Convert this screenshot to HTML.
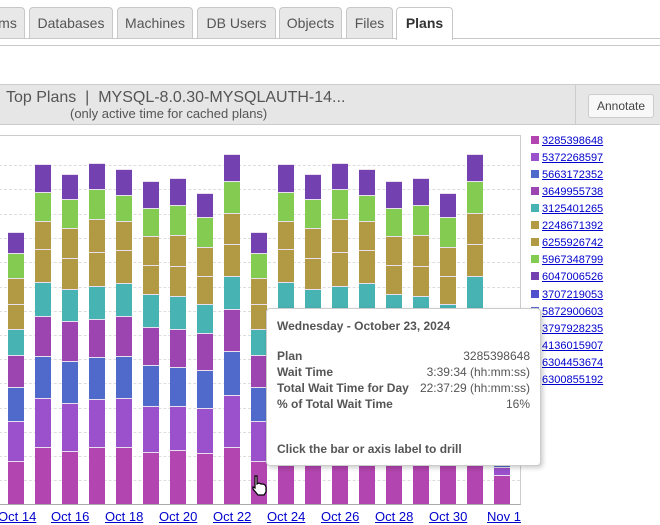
<!DOCTYPE html>
<html><head><meta charset="utf-8">
<style>
*{box-sizing:border-box}
body{margin:0;width:660px;height:525px;overflow:hidden;background:#fff;font-family:"Liberation Sans",Arial,sans-serif;position:relative}
.tab{position:absolute;top:7px;height:32px;background:#e8e8e8;border:1px solid #c8c8c8;border-bottom:none;border-radius:4px 4px 0 0;font-size:14px;color:#555;text-align:center;line-height:30px}
.tab.active{background:#fff;color:#333;font-weight:bold;height:33px}
.hl{position:absolute;left:0;width:660px;height:1px;background:#c8c8c8}
#hdr{position:absolute;left:0;top:84px;width:660px;height:41px;background:#e6e6e6;border-top:1px solid #ccc;border-bottom:1px solid #ccc}
#chart{position:absolute;left:-2px;top:135px;width:523px;height:370px;border:1px solid #ccc;border-bottom:1px solid #aaa}
.g{position:absolute;left:0;width:521px;border-top:1px dashed #ddd}
.seg{position:absolute;left:0;width:16px;border-top:1px solid #e8e0ee}
.lg{position:absolute;left:531px;font-size:11px;color:#00c;text-decoration:underline;line-height:13px}
.lg i{display:inline-block;width:8px;height:8px;margin-right:3px;vertical-align:0}
.ax{position:absolute;top:509px;font-size:13px;color:#00c;text-decoration:underline}
#tip{position:absolute;left:266px;top:308px;width:275px;height:158px;background:#fff;border:1px solid #ccc;border-radius:4px;box-shadow:2px 2px 5px rgba(0,0,0,.2);font-size:12px;color:#555;font-weight:bold}
#tip .r{position:absolute;left:10px;right:10px}
#tip .r span{float:right;font-weight:normal}
</style></head><body>
<div class="tab" style="left:-10px;width:35px">ms</div>
<div class="tab" style="left:29px;width:84px">Databases</div>
<div class="tab" style="left:117px;width:76px">Machines</div>
<div class="tab" style="left:197px;width:79px">DB Users</div>
<div class="tab" style="left:279px;width:63px">Objects</div>
<div class="tab" style="left:346px;width:47px">Files</div>
<div class="hl" style="top:38px"></div>
<div class="tab active" style="left:396px;width:57px;">Plans</div>
<div class="hl" style="top:45px"></div>
<div id="hdr">
<div style="position:absolute;left:6px;top:4px;font-size:16px;color:#555">Top Plans &nbsp;| &nbsp;MYSQL-8.0.30-MYSQLAUTH-14...</div>
<div style="position:absolute;left:70px;top:21px;font-size:13px;color:#555">(only active time for cached plans)</div>
<div style="position:absolute;left:575px;top:0;width:1px;height:39px;background:#ccc"></div>
<div style="position:absolute;left:588px;top:9px;width:66px;height:24px;background:#f8f8f8;border:1px solid #ccc;border-radius:3px;font-size:12px;color:#444;text-align:center;line-height:22px">Annotate</div>
</div>
<div id="chart"></div>
<div class="lg" style="top:135px"><i style="background:#b245b0"></i>3285398648</div>
<div class="lg" style="top:152px"><i style="background:#9b50cc"></i>5372268597</div>
<div class="lg" style="top:169px"><i style="background:#506acc"></i>5663172352</div>
<div class="lg" style="top:186px"><i style="background:#9c44b0"></i>3649955738</div>
<div class="lg" style="top:203px"><i style="background:#47b3b3"></i>3125401265</div>
<div class="lg" style="top:220px"><i style="background:#b29a45"></i>2248671392</div>
<div class="lg" style="top:237px"><i style="background:#b29a45"></i>6255926742</div>
<div class="lg" style="top:254px"><i style="background:#83cc51"></i>5967348799</div>
<div class="lg" style="top:271px"><i style="background:#7442b0"></i>6047006526</div>
<div class="lg" style="top:289px"><i style="background:#5050cc"></i>3707219053</div>
<div class="lg" style="top:306px"><i style="background:#5a6acc"></i>5872900603</div>
<div class="lg" style="top:323px"><i style="background:#b245b0"></i>3797928235</div>
<div class="lg" style="top:340px"><i style="background:#47b3b3"></i>4136015907</div>
<div class="lg" style="top:357px"><i style="background:#7442b0"></i>6304453674</div>
<div class="lg" style="top:374px"><i style="background:#83cc51"></i>6300855192</div>
<div class="ax" style="left:-2px">Oct 14</div>
<div class="ax" style="left:51px">Oct 16</div>
<div class="ax" style="left:105px">Oct 18</div>
<div class="ax" style="left:159px">Oct 20</div>
<div class="ax" style="left:213px">Oct 22</div>
<div class="ax" style="left:267px">Oct 24</div>
<div class="ax" style="left:321px">Oct 26</div>
<div class="ax" style="left:375px">Oct 28</div>
<div class="ax" style="left:429px">Oct 30</div>
<div class="ax" style="left:487px">Nov 1</div>
<div id="tip">
<div class="r" style="top:10px">Wednesday - October 23, 2024</div>
<div class="r" style="top:40px">Plan<span>3285398648</span></div>
<div class="r" style="top:56px">Wait Time<span>3:39:34 (hh:mm:ss)</span></div>
<div class="r" style="top:72px">Total Wait Time for Day<span>22:37:29 (hh:mm:ss)</span></div>
<div class="r" style="top:88px">% of Total Wait Time<span>16%</span></div>
<div class="r" style="top:133px">Click the bar or axis label to drill</div>
</div>
<svg style="position:absolute;left:250px;top:474px" width="20" height="24" viewBox="0 0 20 24"><path d="M5 2 L7 2 L7 10 L9 9 L11 10 L13 10 L15 11 L16 13 L16 18 L14 21 L8 21 L3 15 L3 13 L5 14 Z" fill="#fff" stroke="#000" stroke-width="1.2"/></svg>
<script>
var c=document.getElementById('chart');
var gl=[165,189,214,238,262,287,311,335,359,383,408,432,456,480];
gl.forEach(function(y){var d=document.createElement('div');d.className='g';d.style.top=(y-136)+'px';c.appendChild(d);});
var cols=['#7442b0','#83cc51','#b29a45','#b29a45','#47b3b3','#9c44b0','#506acc','#9b50cc','#b245b0'];
var B=[[232,253,278,304,329,355,387,421,461],[164,192,221,249,282,316,356,398,447],[174,199,228,258,289,321,361,403,451],[163,189,219,252,286,319,357,399,447],[169,195,221,250,283,316,356,398,447],[181,208,236,265,294,327,365,406,452],[178,205,235,266,296,329,367,406,450],[193,217,247,276,304,333,370,408,453],[154,181,213,244,276,309,351,395,447]];
var data=[B[0],B[1],B[2],B[3],B[4],B[5],B[6],B[7],B[8],B[0],B[1],B[2],B[3],B[4],B[5],B[6],B[7],B[8],[440,445,450,452,455,458,462,467,475]];
data.forEach(function(b,i){var x=8+27*i;for(var k=0;k<9;k++){var t=b[k],e=(k<8?b[k+1]:504);var s=document.createElement('div');s.className='seg';s.style.left=(x+1)+'px';s.style.top=(t-136)+'px';s.style.height=(e-t)+'px';s.style.background=cols[k];c.appendChild(s);}});
</script>
</body></html>
